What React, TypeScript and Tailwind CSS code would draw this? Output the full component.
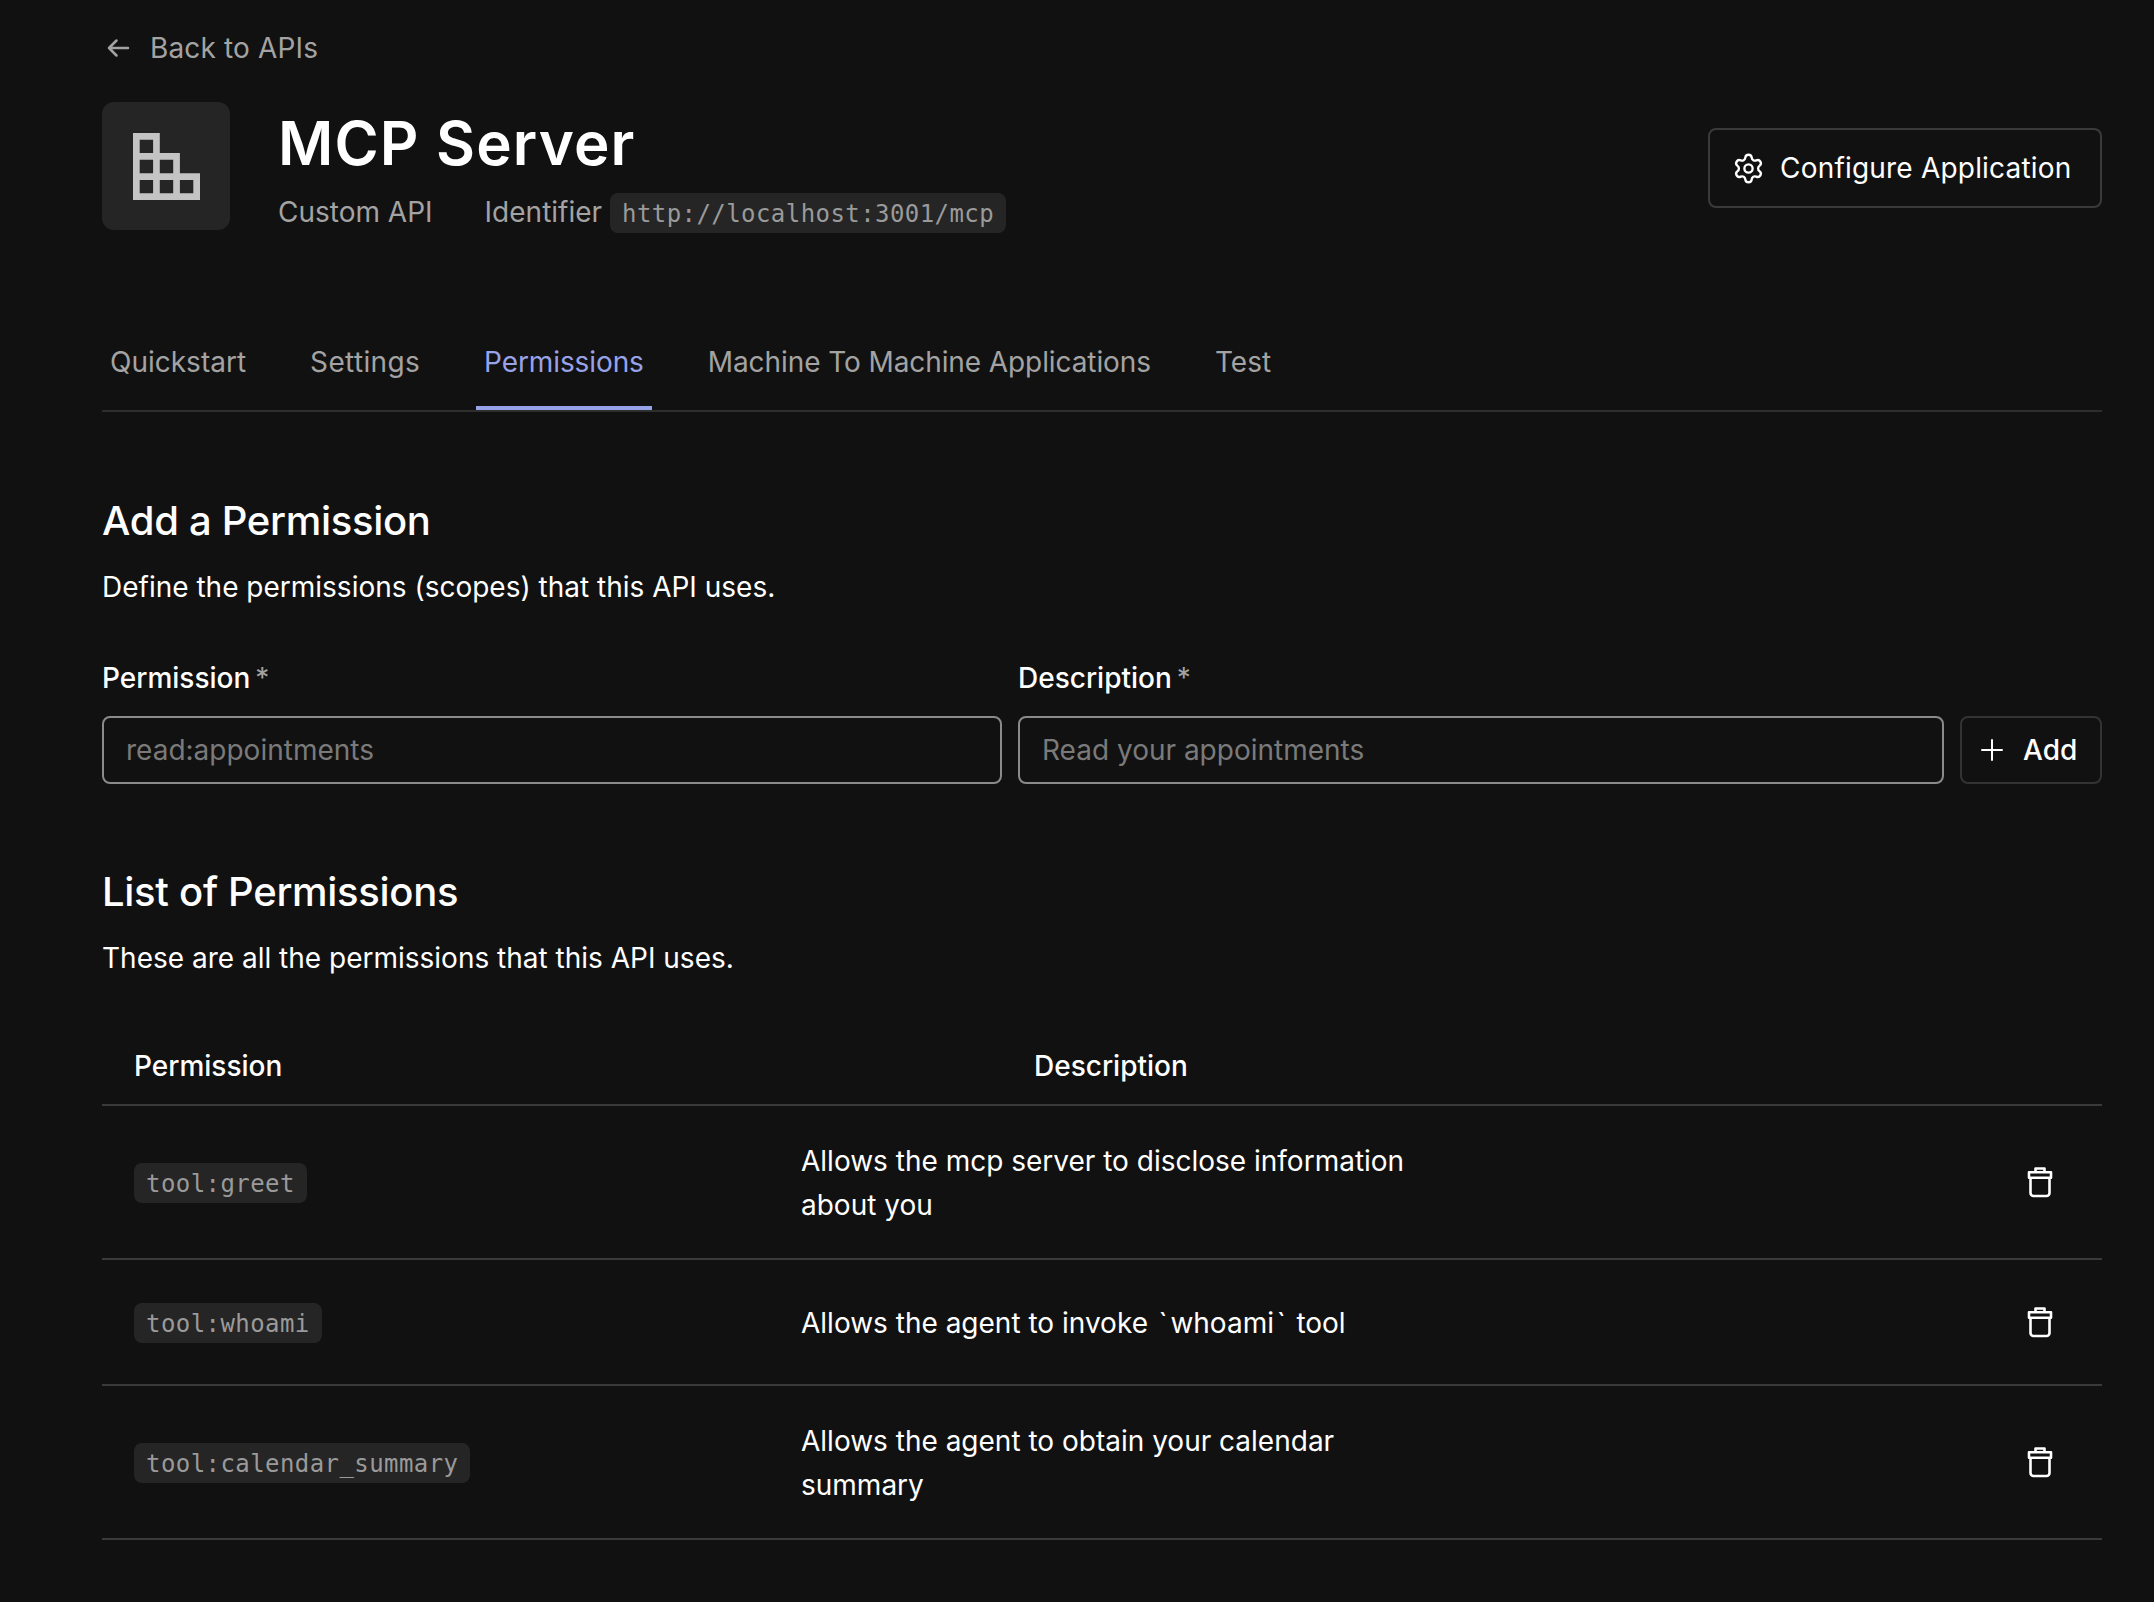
import { Settings } from "lucide-react";

const sans = "font-['Inter','Noto_Sans',sans-serif]";

function Trash() {
  return (
    <svg width="26" height="32" viewBox="0 0 26 32" fill="none" stroke="#ffffff" strokeWidth="2.6" strokeLinejoin="round">
      <path d="M8.5 6V2.5h9V6" />
      <path d="M2 6.3h22v5.4H2z" />
      <path d="M3.5 11.7V27a3 3 0 0 0 3 3h13a3 3 0 0 0 3-3V11.7" />
    </svg>
  );
}

function Chip({ children, className = "" }: { children: React.ReactNode; className?: string }) {
  return (
    <code className={"inline-flex h-10 items-center rounded-lg bg-[#252525] px-3 pt-[2px] font-['DejaVu_Sans_Mono',monospace] text-[24px] tracking-[0.43px] text-[#9a9a9a] " + className}>
      {children}
    </code>
  );
}

const tick = <span className="px-[2.75px]">`</span>;

const rows = [
  { p: "tool:greet", d: <>Allows the mcp server to disclose information about you</>, h: "h-[154px]" },
  { p: "tool:whoami", d: <>Allows the agent to invoke {tick}whoami{tick} tool</>, h: "h-[126px]" },
  { p: "tool:calendar_summary", d: <>Allows the agent to obtain your calendar summary</>, h: "h-[154px]" },
];

export default function App() {
  return (
    <div className={`min-h-[1602px] bg-[#111111] pl-[102px] pr-[52px] text-white ${sans}`}>
      <div className="flex h-[96px] items-center gap-[20px] pl-[4px] text-[28px] tracking-[0.15px] text-[#a3a3a3]">
        <svg width="24" height="20" viewBox="0 0 24 20" fill="none" stroke="#a3a3a3" strokeWidth="2.5" strokeLinecap="round" strokeLinejoin="round">
          <path d="M22 10H3M10.500 2.500 3 10l7.500 7.500" />
        </svg>
        <span>Back to APIs</span>
      </div>

      <div className="mt-[6px] flex h-[128px] items-start justify-between">
        <div className="flex items-start gap-[48px]">
          <div className="flex h-[128px] w-[128px] items-center justify-center rounded-xl bg-[#252525]">
            <svg width="67" height="67" viewBox="0 0 10 10" fill="none">
              <path fillRule="evenodd" fill="#c4c4c4" d="M0 0h4v3h3v3h3v4H0z M1 1v2h2V1z M1 4v2h2V4z M4 4v2h2V4z M1 7v2h2V7z M4 7v2h2V7z M7 7v2h2V7z" />
            </svg>
          </div>
          <div className="pt-[5px]">
            <h1 className="text-[60px] font-semibold leading-[72px] tracking-[1.15px]">MCP Server</h1>
            <div className="mt-[11px] flex h-[44px] items-center text-[28px] text-[#a3a3a3]">
              <span>Custom API</span>
              <span className="ml-[52px]">Identifier</span>
              <Chip className="ml-2 mt-[2px]">http://localhost:3001/mcp</Chip>
            </div>
          </div>
        </div>
        <button className="mt-[26px] flex h-[80px] w-[394px] items-center gap-[15px] rounded-lg border-2 border-[#3a3a3a] pl-[22px] text-[28px] font-normal tracking-[0.2px]">
          <Settings size={33} strokeWidth={1.7} color="#ffffff" />
          <span>Configure Application</span>
        </button>
      </div>

      <nav className="mt-[110px] flex h-[72px] gap-[48px] border-b-2 border-[#2e2e2e] text-[28px] text-[#a3a3a3]">
        <span className="h-[70px] px-2 pt-[1px]">Quickstart</span>
        <span className="h-[70px] px-2 pt-[1px] tracking-[0.35px]">Settings</span>
        <span className="h-[70px] border-b-4 border-[#98a2e8] px-2 pt-[1px] tracking-[-0.1px] text-[#98a2e8]">Permissions</span>
        <span className="h-[70px] px-2 pt-[1px] tracking-[-0.09px]">Machine To Machine Applications</span>
        <span className="h-[70px] px-2 pt-[1px]">Test</span>
      </nav>

      <section className="mt-[83px]">
        <h2 className="text-[40px] font-medium leading-[52px] tracking-[-0.3px]">Add a Permission</h2>
        <p className="mt-[18px] text-[28px] leading-[44px]">Define the permissions (scopes) that this API uses.</p>
        <div className="mt-[47px] flex gap-4">
          <label className="w-[900px]">
            <div className="text-[28px] font-medium leading-[44px]">Permission<span className="ml-[5px] font-normal text-[#a3a3a3]">*</span></div>
            <div className="mt-[16px] flex h-[68px] items-center rounded-lg border-2 border-[#8a8a8a] pl-[22px] text-[28px] text-[#7a7a7a]">read:appointments</div>
          </label>
          <label className="w-[926px]">
            <div className="text-[28px] font-medium leading-[44px]">Description<span className="ml-[5px] font-normal text-[#a3a3a3]">*</span></div>
            <div className="mt-[16px] flex h-[68px] items-center rounded-lg border-2 border-[#8a8a8a] pl-[22px] text-[28px] text-[#7a7a7a]">Read your appointments</div>
          </label>
          <div className="mt-[60px] flex h-[68px] w-[142px] items-center gap-[18px] rounded-lg border-2 border-[#333333] pl-[17px] text-[28px] font-medium">
            <svg width="26" height="26" viewBox="0 0 26 26" fill="none" stroke="#ffffff" strokeWidth="2" strokeLinecap="round">
              <path d="M13 3v20M3 13h20" />
            </svg>
            <span>Add</span>
          </div>
        </div>
      </section>

      <section className="mt-[82px]">
        <h2 className="text-[40px] font-medium leading-[52px] tracking-[-0.3px]">List of Permissions</h2>
        <p className="mt-[18px] text-[28px] leading-[44px]">These are all the permissions that this API uses.</p>
        <div className="mt-[48px] flex h-[78px] items-center border-b-2 border-[#3a3a3a] text-[28px] font-medium">
          <div className="ml-[32px] w-[900px]">Permission</div>
          <div>Description</div>
        </div>
        {rows.map((r) => (
          <div key={r.p} className={`flex items-center border-b-2 border-[#3a3a3a] ${r.h}`}>
            <div className="w-[699px] pl-[32px] pt-[2px]">
              <Chip>{r.p}</Chip>
            </div>
            <div className="w-[620px] pt-[1px] text-[28px] leading-[44px]">{r.d}</div>
            <div className="ml-auto mr-[49px]">
              <Trash />
            </div>
          </div>
        ))}
      </section>
    </div>
  );
}
